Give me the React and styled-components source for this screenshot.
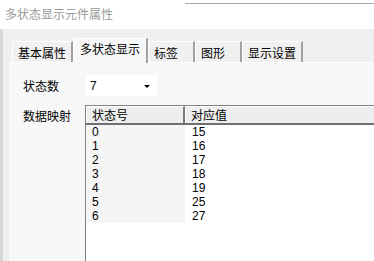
import React from "react";
import styled, { createGlobalStyle } from "styled-components";

const Global = createGlobalStyle`
  html, body { margin: 0; padding: 0; background: #ffffff; }
  body { font-family: "Noto Sans CJK SC", "Liberation Sans", sans-serif; }
`;

const cjk = `"Noto Sans CJK SC", "Liberation Sans", sans-serif`;
const num = `"Liberation Sans", "Noto Sans CJK SC", sans-serif`;

const Window = styled.div`
  width: 374px;
  height: 261px;
  overflow: hidden;
  display: flex;
  flex-direction: column;
  background: #f0f0f0;
  position: relative;
`;

const EdgeLine = styled.div`
  position: absolute;
  top: 3px;
  left: 185px;
  right: 0;
  height: 1px;
  background: #a8a8a8;
`;

const TitleBar = styled.div`
  height: 29px;
  flex: none;
  background: #ffffff;
  box-sizing: border-box;
  padding: 6px 0 0 5px;
  font-family: ${cjk};
  font-size: 12px;
  line-height: 16px;
  color: #9a9a9a;
`;

const Body = styled.div`
  flex: 1;
  display: flex;
  flex-direction: column;
  padding: 9px 0 0 7px;
  border-left: 3px solid #d8d8d8;
  box-sizing: border-box;
  min-height: 0;
`;

const TabStrip = styled.div`
  display: flex;
  align-items: flex-end;
  height: 24px;
  padding-left: 2px;
  flex: none;
`;

const Tab = styled.div`
  box-sizing: border-box;
  min-width: 47px;
  height: ${(p) => (p.$active ? "25px" : "21px")};
  margin-bottom: ${(p) => (p.$active ? "-1px" : "0")};
  padding: ${(p) => (p.$active ? "2px 6px 0" : "3px 5px 0")};
  background: ${(p) => (p.$active ? "#f7f7f7" : "#f0f0f0")};
  border-top: 1px solid #ffffff;
  border-left: 1px solid #ffffff;
  border-right: 2px solid #a0a0a0;
  font-family: ${cjk};
  font-size: 12px;
  line-height: 16px;
  color: #000;
  white-space: nowrap;
  position: relative;
  z-index: ${(p) => (p.$active ? 1 : 0)};
`;

const Panel = styled.div`
  flex: 1;
  background: #f7f7f7;
  border-top: 1px solid #ffffff;
  border-left: 1px solid #ffffff;
  box-sizing: border-box;
  padding: 12px 0 0 12px;
  display: flex;
  flex-direction: column;
  gap: 9px;
  min-height: 0;
`;

const FieldRow = styled.div`
  display: flex;
  align-items: ${(p) => (p.$top ? "flex-start" : "center")};
`;

const Label = styled.div`
  width: 63px;
  flex: none;
  font-family: ${cjk};
  font-size: 12px;
  line-height: 16px;
  color: #000;
  padding-top: ${(p) => p.$pt || 0}px;
`;

const Combo = styled.div`
  width: 71px;
  height: 21px;
  background: #ffffff;
  display: flex;
  align-items: center;
  justify-content: space-between;
  box-sizing: border-box;
  padding: 0 7px 0 4px;
  font-family: ${num};
  font-size: 12px;
  color: #000;
`;

const Arrow = styled.span`
  width: 0;
  height: 0;
  border-left: 3px solid transparent;
  border-right: 3px solid transparent;
  border-top: 3px solid #000;
  margin-top: 2px;
`;

const List = styled.div`
  flex: 1;
  margin-left: -1px;
  border-left: 1px solid #828282;
  border-top: 1px solid #828282;
  background: #ffffff;
  display: flex;
  flex-direction: column;
  min-height: 200px;
`;

const Header = styled.div`
  display: grid;
  grid-template-columns: 99px 1fr;
  height: 17px;
  background: #eeeeee;
  border-bottom: 2px solid #6f6f6f;
`;

const HeadCell = styled.div`
  box-sizing: border-box;
  border-top: 1px solid #ffffff;
  border-left: 1px solid #ffffff;
  border-right: ${(p) => (p.$last ? "none" : "2px solid #7a7a7a")};
  padding-left: 5px;
  font-family: ${cjk};
  font-size: 12px;
  line-height: 16px;
  color: #000;
`;

const Row = styled.div`
  display: grid;
  grid-template-columns: 99px 1fr;
  height: 14px;
`;

const Cell = styled.div`
  padding-left: ${(p) => (p.$first ? 6 : 7)}px;
  background: ${(p) => (p.$first ? "#f5f5f5" : "#ffffff")};
  font-family: ${num};
  font-size: 12px;
  line-height: 14px;
  color: #000;
`;

const rows = [
  [0, 15],
  [1, 16],
  [2, 17],
  [3, 18],
  [4, 19],
  [5, 25],
  [6, 27],
];

const tabs = ["基本属性", "多状态显示", "标签", "图形", "显示设置"];

export default function App() {
  return (
    <>
      <Global />
      <Window>
        <EdgeLine />
        <TitleBar>多状态显示元件属性</TitleBar>
        <Body>
          <TabStrip>
            {tabs.map((t, i) => (
              <Tab key={t} $active={i === 1}>
                {t}
              </Tab>
            ))}
          </TabStrip>
          <Panel>
            <FieldRow>
              <Label>状态数</Label>
              <Combo>
                7
                <Arrow />
              </Combo>
            </FieldRow>
            <FieldRow $top>
              <Label $pt={3}>数据映射</Label>
              <List>
                <Header>
                  <HeadCell>状态号</HeadCell>
                  <HeadCell $last>对应值</HeadCell>
                </Header>
                {rows.map(([a, b]) => (
                  <Row key={a}>
                    <Cell $first>{a}</Cell>
                    <Cell>{b}</Cell>
                  </Row>
                ))}
              </List>
            </FieldRow>
          </Panel>
        </Body>
      </Window>
    </>
  );
}
